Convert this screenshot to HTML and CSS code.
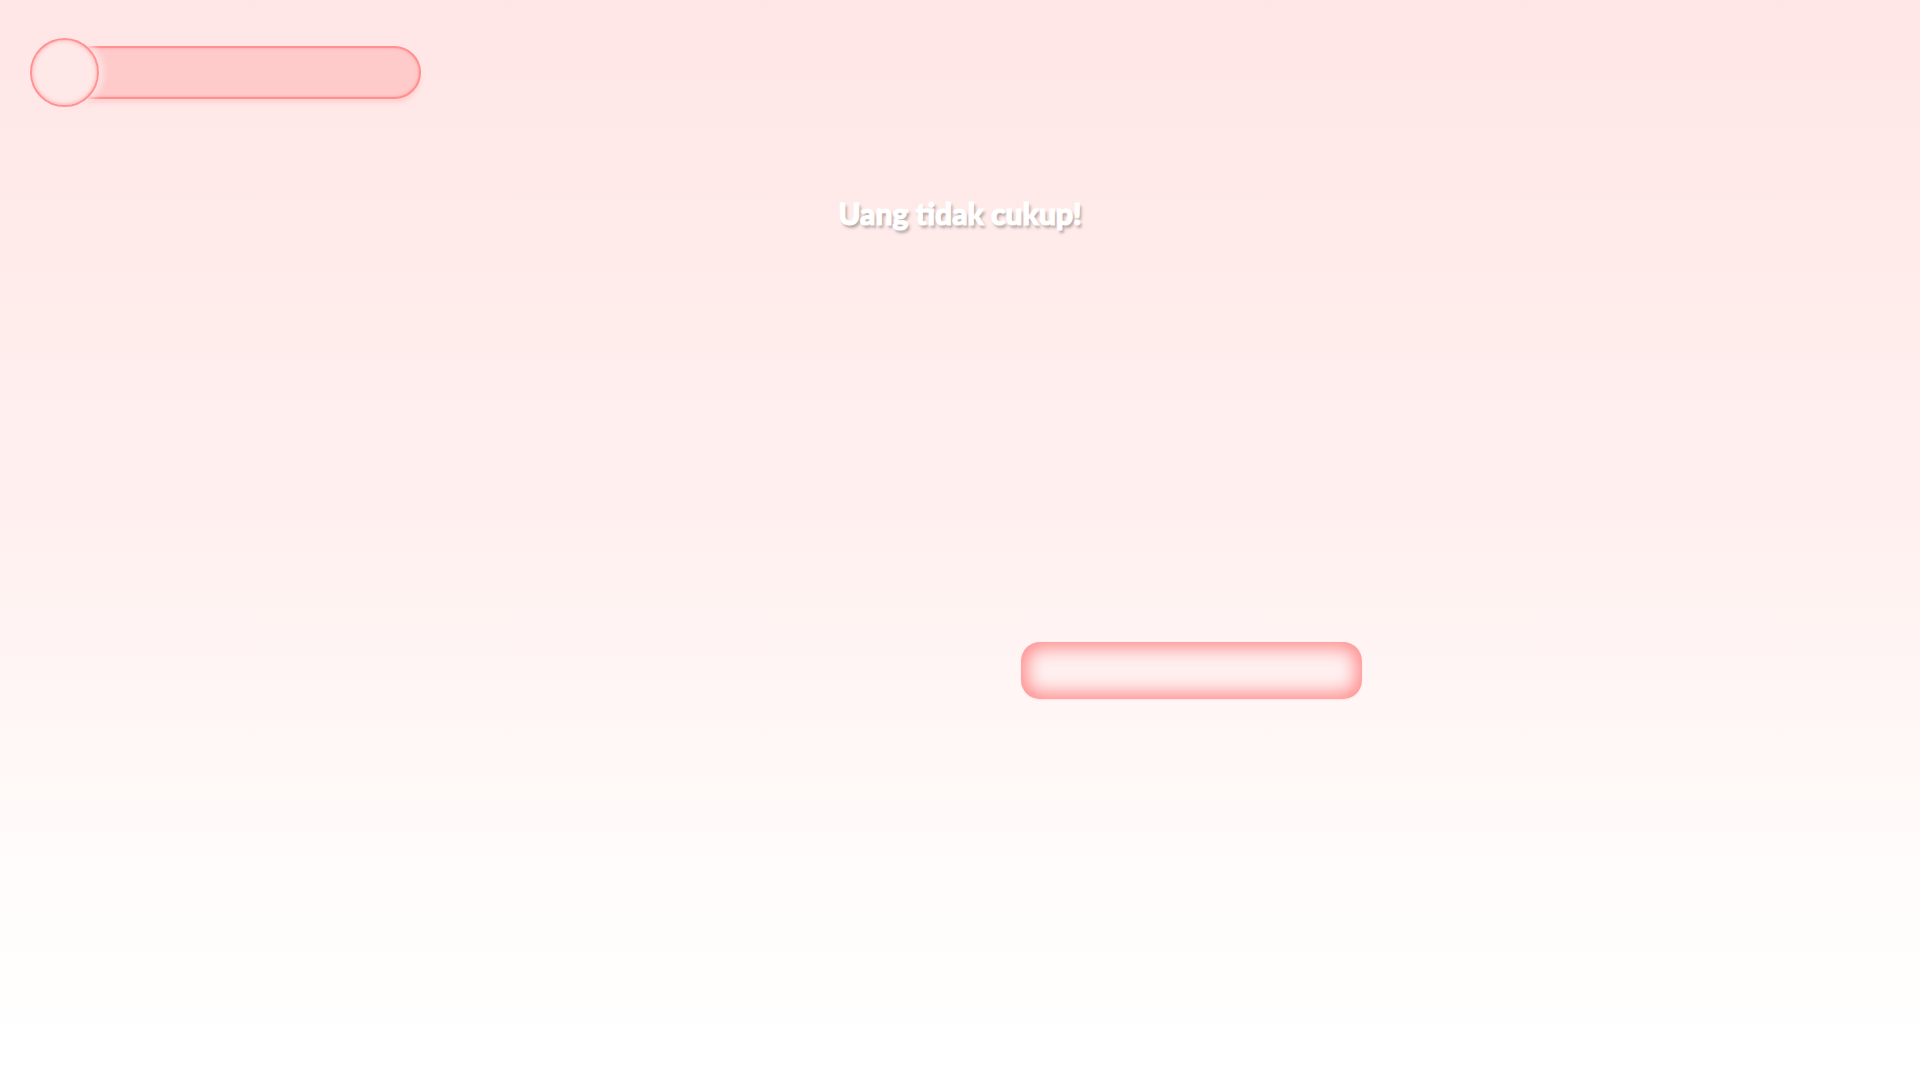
FILE: index.html
```html
<!DOCTYPE html>
<html lang="id">
<head>
    <meta charset="UTF-8">
    <meta name="viewport" content="width=device-width, initial-scale=1.0">
    <title>Toko</title>
    <link rel="stylesheet" href="styles.css">
</head>
<body>
    <div class="hud">
        <div class="money">
            <div class="coin"></div>
            <div class="money-bar"></div>
        </div>
    </div>

    <p class="message">Uang tidak cukup!</p>

    <div class="actions">
        <button type="button" class="action-btn"></button>
    </div>
</body>
</html>
```

FILE: styles.css
```css
html, body {
    margin: 0;
    height: 100%;
}

body {
    min-height: 100vh;
    background: linear-gradient(to bottom, #ffe6e6 0%, #fff1f0 50%, #fffdfc 85%, #ffffff 100%);
    font-family: Lato, "Open Sans", sans-serif;
}

.hud {
    padding: 38px 0 0 30px;
}

.money {
    display: flex;
    align-items: center;
    width: 391px;
    height: 69px;
}

.coin {
    position: relative;
    z-index: 1;
    width: 65px;
    height: 65px;
    flex-shrink: 0;
    border-radius: 50%;
    border: 2px solid #ff9393;
    background: #ffe8e8;
    box-shadow: inset 0 0 4px rgba(255, 120, 120, 0.6), 5px 0 7px rgba(255, 228, 228, 0.95);
}

.money-bar {
    flex: 1;
    height: 49px;
    margin-left: -34px;
    border-radius: 27px;
    border: 2px solid #ff9090;
    background: #ffcaca;
    box-shadow: inset 0 0 3px rgba(255, 130, 130, 0.7), 0 4px 4px rgba(255, 170, 170, 0.35);
}

.message {
    margin: 88px 0 0;
    text-align: center;
    font-size: 30px;
    line-height: 36px;
    font-weight: 900;
    color: #ffffff;
    -webkit-text-stroke: 1px #ffffff;
    text-shadow: 2px 3px 3px rgba(0, 0, 0, 0.3);
}

.actions {
    padding: 411px 0 0 1021px;
}

.action-btn {
    display: block;
    width: 341px;
    height: 57px;
    border: none;
    border-radius: 19px;
    background: #fff0f0;
    box-shadow: inset 0 0 18px 6px rgba(255, 140, 140, 1), 0 1px 2px rgba(200, 120, 120, 0.15);
    cursor: pointer;
}
```
